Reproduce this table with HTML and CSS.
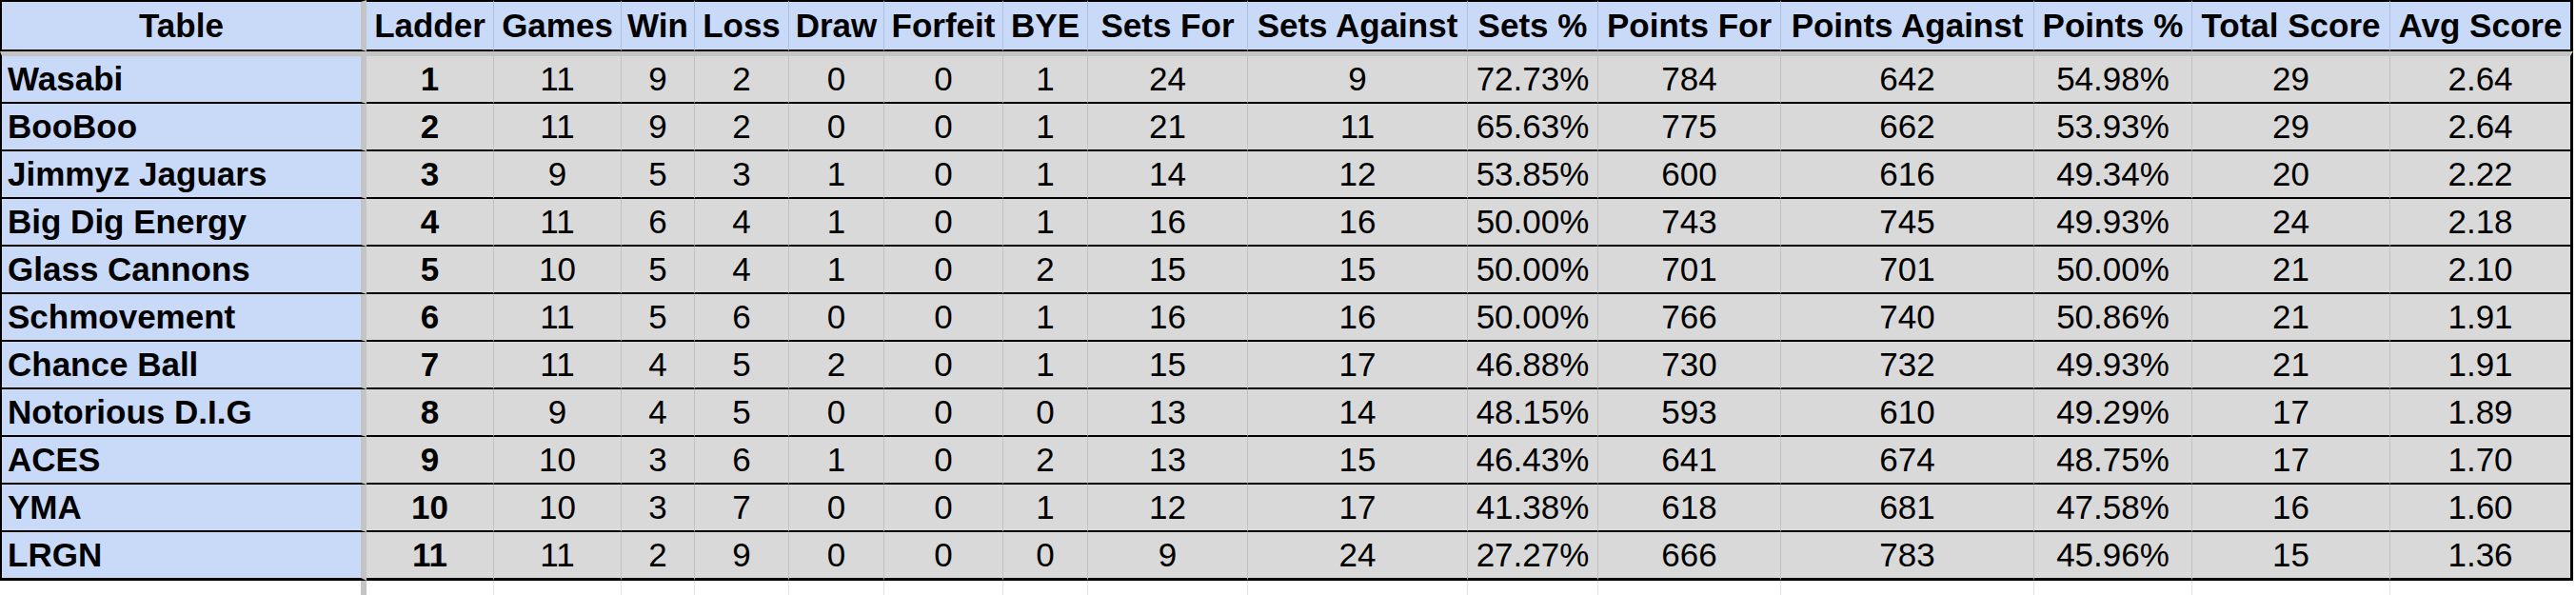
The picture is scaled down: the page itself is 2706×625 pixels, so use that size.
FILE: index.html
```html
<!DOCTYPE html>
<html>
<head>
<meta charset="utf-8">
<link rel="stylesheet" href="styles.css">
</head>
<body>
<table class="ladder">
  <colgroup>
    <col class="c-team"><col class="c-ladder"><col class="c-games"><col class="c-win"><col class="c-loss"><col class="c-draw"><col class="c-forfeit"><col class="c-bye"><col class="c-sf"><col class="c-sa"><col class="c-sp"><col class="c-pf"><col class="c-pa"><col class="c-pp"><col class="c-ts"><col class="c-avg">
  </colgroup>
  <thead>
    <tr>
      <th class="team">Table</th><th>Ladder</th><th>Games</th><th>Win</th><th>Loss</th><th>Draw</th><th>Forfeit</th><th>BYE</th><th>Sets For</th><th>Sets Against</th><th>Sets %</th><th>Points For</th><th>Points Against</th><th>Points %</th><th>Total Score</th><th class="last">Avg Score</th>
    </tr>
  </thead>
  <tbody>
    <tr class="first"><td class="team">Wasabi</td><td class="rank">1</td><td>11</td><td>9</td><td>2</td><td>0</td><td>0</td><td>1</td><td>24</td><td>9</td><td>72.73%</td><td>784</td><td>642</td><td>54.98%</td><td>29</td><td class="last">2.64</td></tr>
    <tr><td class="team">BooBoo</td><td class="rank">2</td><td>11</td><td>9</td><td>2</td><td>0</td><td>0</td><td>1</td><td>21</td><td>11</td><td>65.63%</td><td>775</td><td>662</td><td>53.93%</td><td>29</td><td class="last">2.64</td></tr>
    <tr><td class="team">Jimmyz Jaguars</td><td class="rank">3</td><td>9</td><td>5</td><td>3</td><td>1</td><td>0</td><td>1</td><td>14</td><td>12</td><td>53.85%</td><td>600</td><td>616</td><td>49.34%</td><td>20</td><td class="last">2.22</td></tr>
    <tr><td class="team">Big Dig Energy</td><td class="rank">4</td><td>11</td><td>6</td><td>4</td><td>1</td><td>0</td><td>1</td><td>16</td><td>16</td><td>50.00%</td><td>743</td><td>745</td><td>49.93%</td><td>24</td><td class="last">2.18</td></tr>
    <tr><td class="team">Glass Cannons</td><td class="rank">5</td><td>10</td><td>5</td><td>4</td><td>1</td><td>0</td><td>2</td><td>15</td><td>15</td><td>50.00%</td><td>701</td><td>701</td><td>50.00%</td><td>21</td><td class="last">2.10</td></tr>
    <tr><td class="team">Schmovement</td><td class="rank">6</td><td>11</td><td>5</td><td>6</td><td>0</td><td>0</td><td>1</td><td>16</td><td>16</td><td>50.00%</td><td>766</td><td>740</td><td>50.86%</td><td>21</td><td class="last">1.91</td></tr>
    <tr><td class="team">Chance Ball</td><td class="rank">7</td><td>11</td><td>4</td><td>5</td><td>2</td><td>0</td><td>1</td><td>15</td><td>17</td><td>46.88%</td><td>730</td><td>732</td><td>49.93%</td><td>21</td><td class="last">1.91</td></tr>
    <tr><td class="team">Notorious D.I.G</td><td class="rank">8</td><td>9</td><td>4</td><td>5</td><td>0</td><td>0</td><td>0</td><td>13</td><td>14</td><td>48.15%</td><td>593</td><td>610</td><td>49.29%</td><td>17</td><td class="last">1.89</td></tr>
    <tr><td class="team">ACES</td><td class="rank">9</td><td>10</td><td>3</td><td>6</td><td>1</td><td>0</td><td>2</td><td>13</td><td>15</td><td>46.43%</td><td>641</td><td>674</td><td>48.75%</td><td>17</td><td class="last">1.70</td></tr>
    <tr><td class="team">YMA</td><td class="rank">10</td><td>10</td><td>3</td><td>7</td><td>0</td><td>0</td><td>1</td><td>12</td><td>17</td><td>41.38%</td><td>618</td><td>681</td><td>47.58%</td><td>16</td><td class="last">1.60</td></tr>
    <tr class="final"><td class="team">LRGN</td><td class="rank">11</td><td>11</td><td>2</td><td>9</td><td>0</td><td>0</td><td>0</td><td>9</td><td>24</td><td>27.27%</td><td>666</td><td>783</td><td>45.96%</td><td>15</td><td class="last">1.36</td></tr>
    <tr class="blank"><td class="team"></td><td></td><td></td><td></td><td></td><td></td><td></td><td></td><td></td><td></td><td></td><td></td><td></td><td></td><td></td><td class="last"></td></tr>
  </tbody>
</table>
</body>
</html>
```

FILE: styles.css
```css
html, body {
  margin: 0;
  padding: 0;
  background: #ffffff;
}

.ladder {
  table-layout: fixed;
  border-collapse: separate;
  border-spacing: 0;
  width: 2703px;
  font-family: "Liberation Sans", Arial, sans-serif;
  font-size: 35px;
  color: #000;
}

.c-team { width: 385px; }
.c-ladder { width: 134px; }
.c-games { width: 134px; }
.c-win { width: 77px; }
.c-loss { width: 99px; }
.c-draw { width: 100px; }
.c-forfeit { width: 125px; }
.c-bye { width: 89px; }
.c-sf { width: 168px; }
.c-sa { width: 231px; }
.c-sp { width: 137px; }
.c-pf { width: 192px; }
.c-pa { width: 266px; }
.c-pp { width: 166px; }
.c-ts { width: 208px; }
.c-avg { width: 192px; }

.ladder th,
.ladder td {
  padding: 0;
  text-align: center;
  vertical-align: middle;
  white-space: nowrap;
  overflow: hidden;
  line-height: 48px;
  height: 48px;
}

.ladder th {
  background: #c9daf8;
  font-weight: bold;
  height: 50px;
  line-height: 50px;
  border-top: 2px solid #000;
  border-bottom: 2px solid #000;
  border-right: 1px solid #adbfdf;
}

.ladder td {
  background: #d9d9d9;
  font-weight: normal;
  border-bottom: 2px solid #000;
  border-right: 1px solid #c2c2c2;
}

.ladder .team {
  background: #c9daf8;
  border-left: 2px solid #000;
  border-right: 6px solid #c4c4c4;
}

.ladder td.team {
  text-align: left;
  padding-left: 6px;
  font-weight: bold;
}

.ladder td.rank {
  font-weight: bold;
}

.ladder .last {
  border-right: 3px solid #000;
}

.ladder tr.first td {
  border-top: 5px solid #c4c4c4;
}

.ladder tr.final td {
  border-bottom-width: 3px;
}

.ladder tr.blank td {
  background: #ffffff;
  height: 16px;
  line-height: 16px;
  border-bottom: 0;
  border-right: 1px solid #e2e2e2;
}

.ladder tr.blank td.team {
  border-left: 0;
  border-right: 6px solid #c4c4c4;
}

.ladder tr.blank td.last {
  border-right: 0;
}
```
